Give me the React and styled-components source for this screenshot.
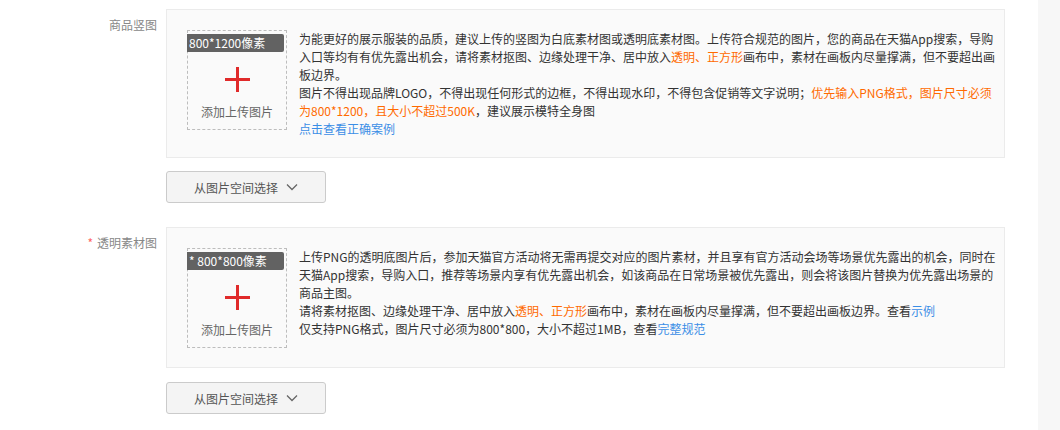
import React from "react";
import styled, { createGlobalStyle } from "styled-components";

const Global = createGlobalStyle`
  html, body { margin: 0; padding: 0; background: #fff; }
  body { font-family: "Microsoft YaHei", "Noto Sans CJK SC", "Noto Sans", sans-serif; }
`;

const Page = styled.div`
  display: flex;
  width: 1060px;
  height: 430px;
  overflow: hidden;
`;

const Main = styled.div`
  flex: 1;
  padding-top: 9px;
  display: flex;
  flex-direction: column;
  gap: 24px;
`;

const Rail = styled.div`
  width: 22px;
  background: #f7f7f7;
`;

const Section = styled.div`
  display: grid;
  grid-template-columns: 157px 839px;
  column-gap: 9px;
`;

const Label = styled.div`
  text-align: right;
  font-size: 12px;
  line-height: 18px;
  padding-top: 7px;
  color: #888;
`;

const Star = styled.span`
  color: #f66;
  margin-right: 4px;
`;

const Content = styled.div`
  display: flex;
  flex-direction: column;
  align-items: flex-start;
  gap: ${(p) => p.$gap}px;
`;

const Card = styled.div`
  box-sizing: border-box;
  width: 839px;
  background: #fafafa;
  border: 1px solid #ebebeb;
  padding: 20px 3px 19px 20px;
  display: flex;
  gap: 12px;
  align-items: flex-start;
`;

const UploadBox = styled.div`
  box-sizing: border-box;
  flex: none;
  width: 100px;
  height: 100px;
  border: 1px dashed #bdbdbd;
  display: flex;
  flex-direction: column;
  align-items: center;
  padding-top: 3px;
`;

const Tag = styled.div`
  align-self: flex-start;
  box-sizing: border-box;
  margin-left: -1px;
  width: 97px;
  height: 18px;
  line-height: 18px;
  background: #626262;
  color: #fff;
  font-size: 12px;
  padding-left: 2px;
  border-radius: 0 2px 2px 0;
  white-space: nowrap;
`;

const Plus = styled.svg`
  margin-top: 15px;
  width: 25px;
  height: 25px;
`;

const UploadText = styled.div`
  margin-top: 11px;
  font-size: 12px;
  line-height: 18px;
  color: #666;
`;

const Desc = styled.div`
  flex: 1;
  font-size: 12px;
  line-height: 18px;
  color: #333;
`;

const Hi = styled.span`
  color: #ff6a00;
`;

const Link = styled.a`
  color: #3a8ee6;
  text-decoration: none;
  cursor: pointer;
`;

const Button = styled.button`
  box-sizing: border-box;
  width: 160px;
  height: 32px;
  border: 1px solid #cbcbcb;
  border-radius: 3px;
  background: #f4f4f4;
  color: #555;
  font-family: inherit;
  font-size: 12px;
  display: flex;
  align-items: center;
  justify-content: center;
  gap: 8px;
  padding: 0;
`;

const Chevron = () => (
  <svg width="12" height="8" viewBox="0 0 12 8">
    <polyline points="1,1.5 6,6.5 11,1.5" fill="none" stroke="#666" strokeWidth="1.3" />
  </svg>
);

const PlusIcon = () => (
  <Plus viewBox="0 0 25 25">
    <rect x="0" y="11" width="25" height="3" fill="#e02a2a" />
    <rect x="11" y="0" width="3" height="25" fill="#e02a2a" />
  </Plus>
);

const Upload = ({ tag }) => (
  <UploadBox>
    <Tag>{tag}</Tag>
    <PlusIcon />
    <UploadText>添加上传图片</UploadText>
  </UploadBox>
);

export default function App() {
  return (
    <>
      <Global />
      <Page>
        <Main>
          <Section>
            <Label>商品竖图</Label>
            <Content $gap={13}>
              <Card>
                <Upload tag="800*1200像素" />
                <Desc>
                  为能更好的展示服装的品质，建议上传的竖图为白底素材图或透明底素材图。上传符合规范的图片，您的商品在天猫App搜索，导购入口等均有有优先露出机会，请将素材抠图、边缘处理干净、居中放入<Hi>透明、正方形</Hi>画布中，素材在画板内尽量撑满，但不要超出画板边界。
                  <br />
                  图片不得出现品牌LOGO，不得出现任何形式的边框，不得出现水印，不得包含促销等文字说明；<Hi>优先输入PNG格式，图片尺寸必须为800*1200，且大小不超过500K</Hi>，建议展示模特全身图
                  <br />
                  <Link>点击查看正确案例</Link>
                </Desc>
              </Card>
              <Button>
                从图片空间选择
                <Chevron />
              </Button>
            </Content>
          </Section>
          <Section>
            <Label>
              <Star>*</Star>透明素材图
            </Label>
            <Content $gap={14}>
              <Card>
                <Upload tag="* 800*800像素" />
                <Desc>
                  上传PNG的透明底图片后，参加天猫官方活动将无需再提交对应的图片素材，并且享有官方活动会场等场景优先露出的机会，同时在天猫App搜索，导购入口，推荐等场景内享有优先露出机会，如该商品在日常场景被优先露出，则会将该图片替换为优先露出场景的商品主图。
                  <br />
                  请将素材抠图、边缘处理干净、居中放入<Hi>透明、正方形</Hi>画布中，素材在画板内尽量撑满，但不要超出画板边界。查看<Link>示例</Link>
                  <br />
                  仅支持PNG格式，图片尺寸必须为800*800，大小不超过1MB，查看<Link>完整规范</Link>
                </Desc>
              </Card>
              <Button>
                从图片空间选择
                <Chevron />
              </Button>
            </Content>
          </Section>
        </Main>
        <Rail />
      </Page>
    </>
  );
}
